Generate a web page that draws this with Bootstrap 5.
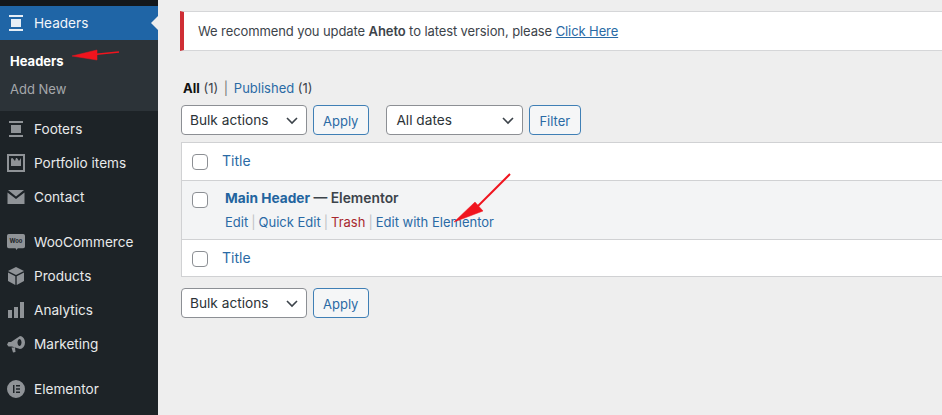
<!DOCTYPE html>
<html lang="en"><head><meta charset="utf-8"><title>Headers</title>
<link href="https://cdn.jsdelivr.net/npm/bootstrap@5.3.0/dist/css/bootstrap.min.css" rel="stylesheet">
<style>
html,body{height:415px;overflow:hidden}
body{font-family:Inter,"Liberation Sans",sans-serif;font-size:13px;background:#eeeeee;color:#3c434a;position:relative}
a{text-decoration:none;color:#2a6aa5}
.wp-side{width:158px;height:415px;background:#1d2327;border-top:6px solid #14181b;flex:none}
.wp-item{display:flex;align-items:center;height:34px;color:#e8eaeb;font-size:13.6px;padding-left:7px;gap:9px}
.wp-item svg{width:18px;height:18px;flex:none;fill:#8f9397}
.wp-active{background:#1f65a6;color:#f2f6fa;position:relative}
.wp-active svg{fill:#e6eef6}
.wp-active::after{content:"";position:absolute;right:0;top:10px;border:7px solid transparent;border-right-color:#eeeeee;border-left:0}
.wp-sub{background:#2c3338;height:71px;padding-top:8px}
.wp-sub div{height:28px;display:flex;align-items:center;padding-left:10px;font-size:13px;color:#a5a8ab}
.wp-sub .cur{color:#fff;font-weight:700}
.wp-gap-a{margin-top:1px}
.wp-gap-b{margin-top:11px}
.wp-gap-c{margin-top:11px}
.wp-main{padding:11px 0 0 23px;min-width:0;flex:1}
.wp-notice{margin-left:-1px;height:40px;background:#fff;border:1px solid #d5d6d8;border-left:4px solid #cf2e35;border-right:0;display:flex;align-items:center;padding:1px 0 0 14px;font-size:13px;letter-spacing:-.1px;white-space:nowrap}
.wp-notice a{text-decoration:underline}
.wp-notice b{font-weight:600}
.wp-views{margin-top:29px;height:17px;font-size:13px;line-height:17px;margin-left:2px;white-space:nowrap}
.wp-views b{color:#111;font-weight:700}
.wp-views i{font-style:normal;color:#777;margin:0 2px}
.wp-bar{display:flex;gap:6px;height:30px;margin-top:8px}
.wp-sel{height:30px;background:#fff;border:1px solid #8c8f94;border-radius:4px;display:flex;align-items:center;justify-content:space-between;padding:1px 8px 0;font-size:13.7px;color:#2c3338}
.wp-sel svg{width:12px;height:8px;fill:none;stroke:#3c434a;stroke-width:1.6}
.wp-w1{width:126px}
.wp-w2{width:137px;margin-left:11px;padding-left:9px}
.wp-apply{height:30px;padding:0 10px 0 9px;font-size:13px;line-height:30px;color:#2a6aa5;background:#f5f6f7;border:1px solid #3f7fb5;border-radius:4px}
.wp-table{margin-top:7px;height:135px;background:#fff;border:1px solid #d0d1d3;border-right:0}
.wp-row{display:flex;gap:14px;padding-left:10px;align-items:center;height:37px;font-size:14px}
.wp-row>a{padding-bottom:3px}
.wp-tall{height:60px;align-items:flex-start;padding-top:9px;background:#f3f4f5;border-top:1px solid #d0d1d3;border-bottom:1px solid #d0d1d3;gap:17px}
.wp-check{width:16px;height:16px;background:#fff;border:1px solid #8c8f94;border-radius:4px;flex:none}
.wp-tall .wp-check{margin-top:2px}
.wp-name{font-weight:600;font-size:13.8px;line-height:16px;white-space:nowrap;color:#3c434a}
.wp-name a{font-weight:700;font-size:13.7px;color:#22649f}
.wp-acts{margin-top:8px;font-size:13px;line-height:16px;white-space:nowrap}
.wp-acts u{text-decoration:none;color:#bfc2c5;margin:0 3px}
.wp-acts .del{color:#a8282e}
.wp-bar2{margin-top:11px}
.wp-arrow{position:absolute;left:0;top:0;width:942px;height:415px;pointer-events:none}
</style></head>
<body>
<div class="d-flex">
<nav class="wp-side">
<div class="wp-item wp-active"><svg viewBox="0 0 18 18"><path d="M2 1h14v2H2zM4 5h10v8H4zM2 15h14v2H2z"/></svg>Headers</div>
<div class="wp-sub"><div class="cur">Headers</div><div>Add New</div></div>
<div class="wp-item wp-gap-a"><svg viewBox="0 0 18 18"><path d="M2 1h14v2H2zM4 5h10v8H4zM2 15h14v2H2z"/></svg>Footers</div>
<div class="wp-item"><svg viewBox="0 0 18 18"><path fill-rule="evenodd" d="M0 0h18v18H0zM2 2v14h14V2zM4 12V4.500l1.500-.5L8 7l1-3h1l2 3 2-3v8z"/></svg>Portfolio items</div>
<div class="wp-item"><svg viewBox="0 0 18 18"><path d="M1 2h16L9 8.500zM0.500 4.500L9 11l8.500-6.500V16H.5z"/></svg>Contact</div>
<div class="wp-item wp-gap-b"><svg viewBox="0 0 20 20"><path d="M2 1h16a2 2 0 0 1 2 2v12a2 2 0 0 1-2 2h-6l-1.500 2-1-2H2a2 2 0 0 1-2-2V3a2 2 0 0 1 2-2z"/><text x="10" y="11.500" text-anchor="middle" font-size="6.500" font-weight="700" fill="#1d2327" font-family="Inter,sans-serif">Woo</text></svg>WooCommerce</div>
<div class="wp-item"><svg viewBox="0 0 18 18"><path d="M9 0l8 4-8 4-8-4zM1 5.500l7.300 3.800V18L1 14zM17 5.500V14l-7.300 4V9.300z"/></svg>Products</div>
<div class="wp-item"><svg viewBox="0 0 18 18"><path d="M1 9h4v8H1zM7 6h4v11H7zM13 1h4v16h-4z"/></svg>Analytics</div>
<div class="wp-item"><svg viewBox="0 0 18 18"><path fill-rule="evenodd" d="M13 1a5 6.500 0 0 1 0 13L5 11.500H1.500L0 9.500 1.500 7H4zM12.500 4a2 3.500 0 1 0 .01 0zM4.500 12.500h3.500L8.500 17l-2.500.5z"/></svg>Marketing</div>
<div class="wp-item wp-gap-c"><svg viewBox="0 0 18 18"><path fill-rule="evenodd" d="M9 0a9 9 0 1 1 0 18A9 9 0 0 1 9 0zM6 5v8h1.500V5zM9 5v1.500h4V5zm0 3.200v1.500h4V8.200zm0 3.300V13h4v-1.500z"/></svg>Elementor</div>
</nav>
<main class="wp-main">
<div class="wp-notice"><span>We recommend you update <b>Aheto</b> to latest version, please <a href="#">Click Here</a></span></div>
<div class="wp-views"><b>All</b> (1) <i>|</i> <a href="#">Published</a> (1)</div>
<div class="wp-bar">
<div class="wp-sel wp-w1">Bulk actions<svg viewBox="0 0 12 8"><path d="M1 1l5 5 5-5"/></svg></div><a class="wp-apply" href="#">Apply</a>
<div class="wp-sel wp-w2">All dates<svg viewBox="0 0 12 8"><path d="M1 1l5 5 5-5"/></svg></div><a class="wp-apply" href="#">Filter</a>
</div>
<div class="wp-table">
<div class="wp-row"><span class="wp-check"></span><a href="#">Title</a></div>
<div class="wp-row wp-tall"><span class="wp-check"></span><div><div class="wp-name"><a href="#">Main Header</a> — Elementor</div>
<div class="wp-acts"><a href="#">Edit</a><u>|</u><a href="#">Quick Edit</a><u>|</u><a class="del" href="#">Trash</a><u>|</u><a href="#">Edit with Elementor</a></div></div></div>
<div class="wp-row"><span class="wp-check"></span><a href="#">Title</a></div>
</div>
<div class="wp-bar wp-bar2"><div class="wp-sel wp-w1">Bulk actions<svg viewBox="0 0 12 8"><path d="M1 1l5 5 5-5"/></svg></div><a class="wp-apply" href="#">Apply</a></div>
</main>
</div>
<svg class="wp-arrow" viewBox="0 0 942 415"><g fill="#f0141e" stroke="#f0141e"><path d="M72 56L97 50V60Z" stroke-width=".5"/><path d="M94 54.500L119 52" stroke-width="1.500" fill="none"/><path d="M454 222L475 202 483 211Z" stroke-width=".5"/><path d="M478 206L510 174" stroke-width="2" fill="none"/></g></svg>
<script src="https://cdn.jsdelivr.net/npm/bootstrap@5.3.0/dist/js/bootstrap.bundle.min.js"></script>
</body></html>
